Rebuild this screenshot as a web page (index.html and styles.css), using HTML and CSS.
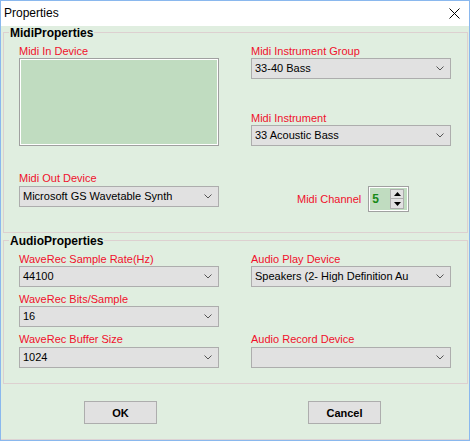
FILE: index.html
```html
<!DOCTYPE html>
<html>
<head>
<meta charset="utf-8">
<link rel="stylesheet" href="styles.css">
</head>
<body>
<div class="window">
  <div class="titlebar">
    <span class="title">Properties</span>
    <svg class="close" width="11" height="11" viewBox="0 0 11 11"><path d="M0.5 0.5 L10.5 10.5 M10.5 0.5 L0.5 10.5" stroke="#000" stroke-width="1" fill="none"/></svg>
  </div>
  <div class="client">
    <div class="group midi">
      <div class="legend">MidiProperties</div>
      <div class="cols">
        <div class="col">
          <div class="label">Midi In Device</div>
          <div class="listbox"></div>
          <div class="label m-out">Midi Out Device</div>
          <div class="combo m1"><span>Microsoft GS Wavetable Synth</span><svg class="chev" width="8" height="5" viewBox="0 0 8 5"><polyline points="0.5,0.5 4,4 7.5,0.5" fill="none" stroke="#555" stroke-width="1"/></svg></div>
        </div>
        <div class="col">
          <div class="label">Midi Instrument Group</div>
          <div class="combo"><span>33-40 Bass</span><svg class="chev" width="8" height="5" viewBox="0 0 8 5"><polyline points="0.5,0.5 4,4 7.5,0.5" fill="none" stroke="#555" stroke-width="1"/></svg></div>
          <div class="label m-inst">Midi Instrument</div>
          <div class="combo"><span>33 Acoustic Bass</span><svg class="chev" width="8" height="5" viewBox="0 0 8 5"><polyline points="0.5,0.5 4,4 7.5,0.5" fill="none" stroke="#555" stroke-width="1"/></svg></div>
          <div class="channel-row">
            <span class="label">Midi Channel</span>
            <div class="spin">
              <span class="spin-value">5</span>
              <div class="spin-btns">
                <div class="spin-btn"><svg width="7" height="4" viewBox="0 0 7 4"><polygon points="3.5,0 7,4 0,4" fill="#000"/></svg></div>
                <div class="spin-btn"><svg width="7" height="4" viewBox="0 0 7 4"><polygon points="0,0 7,0 3.5,4" fill="#000"/></svg></div>
              </div>
            </div>
          </div>
        </div>
      </div>
    </div>
    <div class="group audio">
      <div class="legend">AudioProperties</div>
      <div class="cols">
        <div class="col">
          <div class="label">WaveRec Sample Rate(Hz)</div>
          <div class="combo"><span>44100</span><svg class="chev" width="8" height="5" viewBox="0 0 8 5"><polyline points="0.5,0.5 4,4 7.5,0.5" fill="none" stroke="#555" stroke-width="1"/></svg></div>
          <div class="label a-next">WaveRec Bits/Sample</div>
          <div class="combo"><span>16</span><svg class="chev" width="8" height="5" viewBox="0 0 8 5"><polyline points="0.5,0.5 4,4 7.5,0.5" fill="none" stroke="#555" stroke-width="1"/></svg></div>
          <div class="label a-next">WaveRec Buffer Size</div>
          <div class="combo m1"><span>1024</span><svg class="chev" width="8" height="5" viewBox="0 0 8 5"><polyline points="0.5,0.5 4,4 7.5,0.5" fill="none" stroke="#555" stroke-width="1"/></svg></div>
        </div>
        <div class="col">
          <div class="label">Audio Play Device</div>
          <div class="combo"><span>Speakers (2- High Definition Au</span><svg class="chev" width="8" height="5" viewBox="0 0 8 5"><polyline points="0.5,0.5 4,4 7.5,0.5" fill="none" stroke="#555" stroke-width="1"/></svg></div>
          <div class="label a-rec">Audio Record Device</div>
          <div class="combo m1"><span></span><svg class="chev" width="8" height="5" viewBox="0 0 8 5"><polyline points="0.5,0.5 4,4 7.5,0.5" fill="none" stroke="#555" stroke-width="1"/></svg></div>
        </div>
      </div>
    </div>
    <div class="buttons">
      <div class="btn">OK</div>
      <div class="btn">Cancel</div>
    </div>
  </div>
</div>
</body>
</html>
```

FILE: styles.css
```css
* { box-sizing: border-box; }
html, body { margin: 0; padding: 0; }
body {
  width: 470px;
  height: 441px;
  overflow: hidden;
  font-family: "Liberation Sans", Arial, sans-serif;
  font-size: 11px;
  color: #000;
}
.window {
  width: 470px;
  height: 441px;
  border: 1px solid #8ab8ee;
  display: flex;
  flex-direction: column;
  background: #fff;
}
.titlebar {
  height: 25px;
  flex: none;
  background: #fff;
  display: flex;
  align-items: center;
  justify-content: space-between;
  padding: 0 9px 2px 3px;
}
.title {
  font-size: 12px;
  line-height: 14px;
}
.close { display: block; margin-top: 2px; }
.client {
  flex: 1;
  background: #e0eee0;
  display: flex;
  flex-direction: column;
  border-bottom: 1px solid #ddd3d3;
}
.group {
  flex: none;
  margin: 6px 1px 0 2px;
  border: 1px solid #ddd0d0;
  display: flex;
  flex-direction: column;
}
.midi { height: 201px; }
.audio { height: 144px; margin-top: 7px; }
.legend {
  margin: -7px 0 0 5px;
  padding: 0 1px;
  align-self: flex-start;
  background: #e0eee0;
  font-weight: bold;
  font-size: 12px;
  line-height: 14px;
  height: 14px;
}
.cols {
  display: flex;
  gap: 32px;
  padding-left: 15px;
  margin-top: 5px;
}
.col {
  width: 200px;
  display: flex;
  flex-direction: column;
}
.label {
  color: #f0102c;
  line-height: 13px;
  height: 13px;
  white-space: nowrap;
}
.listbox {
  height: 88px;
  border: 1px solid #a0a0a0;
  box-shadow: inset 0 0 0 1px #fff;
  background: #c0dcc0;
}
.m-out { margin-top: 26px; }
.m-inst { margin-top: 33px; }
.m1 { margin-top: 1px; }
.a-next { margin-top: 6px; }
.a-rec { margin-top: 46px; }
.combo {
  height: 21px;
  background: #e1e1e1;
  border: 1px solid #adadad;
  display: flex;
  align-items: center;
  justify-content: space-between;
  padding: 0 6px 0 3px;
  white-space: nowrap;
  line-height: 13px;
}
.chev { display: block; flex: none; }
.channel-row {
  margin-top: 40px;
  display: flex;
  align-items: center;
  gap: 7px;
  padding-left: 46px;
}
.spin {
  width: 41px;
  height: 26px;
  border: 1px solid #a0a0a0;
  box-shadow: inset 0 0 0 1px #fff;
  background: #c0dcc0;
  display: flex;
  align-items: center;
  justify-content: space-between;
  padding: 0 4px 0 3px;
}
.spin-value {
  color: #178a17;
  font-weight: bold;
  font-size: 12px;
  line-height: 14px;
}
.spin-btns {
  display: flex;
  flex-direction: column;
}
.spin-btn {
  width: 14px;
  height: 10px;
  background: #e1e1e1;
  border: 1px solid #adadad;
  display: flex;
  align-items: center;
  justify-content: center;
}
.spin-btn + .spin-btn { border-top: none; }
.spin-btn svg { display: block; }
.buttons {
  display: flex;
  gap: 151px;
  padding-left: 83px;
  margin-top: 17px;
}
.btn {
  width: 73px;
  height: 23px;
  background: #e1e1e1;
  border: 1px solid #adadad;
  font-weight: bold;
  display: flex;
  align-items: center;
  justify-content: center;
}
```
